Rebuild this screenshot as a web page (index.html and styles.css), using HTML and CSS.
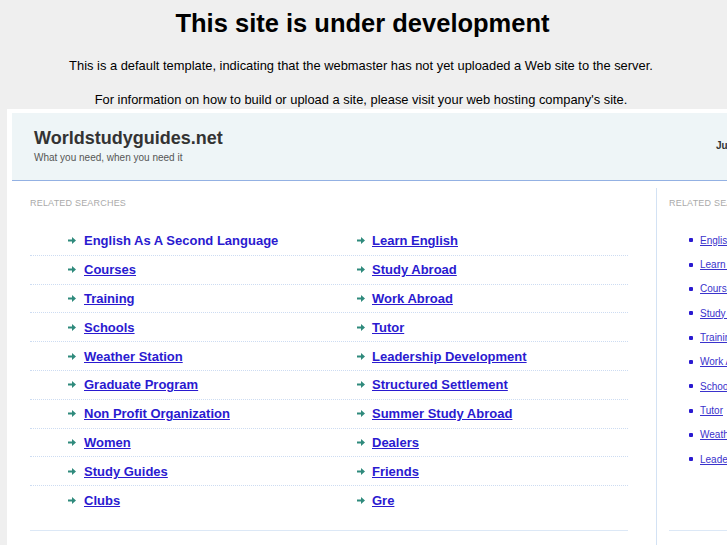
FILE: index.html
```html
<!DOCTYPE html>
<html lang="en">
<head>
    <meta charset="UTF-8">
    <title>This site is under development</title>
    <link rel="stylesheet" href="styles.css">
</head>
<body>

<div class="notice">
    <h1>This site is under development</h1>
    <p class="first">This is a default template, indicating that the webmaster has not yet uploaded a Web site to the server.</p>
    <p class="second">For information on how to build or upload a site, please visit your web hosting company's site.</p>
</div>

<div class="frame">
    <div class="header">
        <div class="brand">
            <div class="title">Worldstudyguides.net</div>
            <div class="tagline">What you need, when you need it</div>
        </div>
        <div class="date">June 24, 2011</div>
    </div>

    <div class="content">
        <div class="main">
            <div class="label">Related Searches</div>
            <div class="rows">
                <div class="row">
                    <div class="cell"><svg class="arrow" viewBox="0 0 8 7"><path d="M0 2.6h4V0l4 3.5L4 7V4.4H0z"/></svg><a href="#" class="plain">English As A Second Language</a></div>
                    <div class="cell"><svg class="arrow" viewBox="0 0 8 7"><path d="M0 2.6h4V0l4 3.5L4 7V4.4H0z"/></svg><a href="#">Learn English</a></div>
                </div>
                <div class="row">
                    <div class="cell"><svg class="arrow" viewBox="0 0 8 7"><path d="M0 2.6h4V0l4 3.5L4 7V4.4H0z"/></svg><a href="#">Courses</a></div>
                    <div class="cell"><svg class="arrow" viewBox="0 0 8 7"><path d="M0 2.6h4V0l4 3.5L4 7V4.4H0z"/></svg><a href="#">Study Abroad</a></div>
                </div>
                <div class="row">
                    <div class="cell"><svg class="arrow" viewBox="0 0 8 7"><path d="M0 2.6h4V0l4 3.5L4 7V4.4H0z"/></svg><a href="#">Training</a></div>
                    <div class="cell"><svg class="arrow" viewBox="0 0 8 7"><path d="M0 2.6h4V0l4 3.5L4 7V4.4H0z"/></svg><a href="#">Work Abroad</a></div>
                </div>
                <div class="row">
                    <div class="cell"><svg class="arrow" viewBox="0 0 8 7"><path d="M0 2.6h4V0l4 3.5L4 7V4.4H0z"/></svg><a href="#">Schools</a></div>
                    <div class="cell"><svg class="arrow" viewBox="0 0 8 7"><path d="M0 2.6h4V0l4 3.5L4 7V4.4H0z"/></svg><a href="#">Tutor</a></div>
                </div>
                <div class="row">
                    <div class="cell"><svg class="arrow" viewBox="0 0 8 7"><path d="M0 2.6h4V0l4 3.5L4 7V4.4H0z"/></svg><a href="#">Weather Station</a></div>
                    <div class="cell"><svg class="arrow" viewBox="0 0 8 7"><path d="M0 2.6h4V0l4 3.5L4 7V4.4H0z"/></svg><a href="#">Leadership Development</a></div>
                </div>
                <div class="row">
                    <div class="cell"><svg class="arrow" viewBox="0 0 8 7"><path d="M0 2.6h4V0l4 3.5L4 7V4.4H0z"/></svg><a href="#">Graduate Program</a></div>
                    <div class="cell"><svg class="arrow" viewBox="0 0 8 7"><path d="M0 2.6h4V0l4 3.5L4 7V4.4H0z"/></svg><a href="#">Structured Settlement</a></div>
                </div>
                <div class="row">
                    <div class="cell"><svg class="arrow" viewBox="0 0 8 7"><path d="M0 2.6h4V0l4 3.5L4 7V4.4H0z"/></svg><a href="#">Non Profit Organization</a></div>
                    <div class="cell"><svg class="arrow" viewBox="0 0 8 7"><path d="M0 2.6h4V0l4 3.5L4 7V4.4H0z"/></svg><a href="#">Summer Study Abroad</a></div>
                </div>
                <div class="row">
                    <div class="cell"><svg class="arrow" viewBox="0 0 8 7"><path d="M0 2.6h4V0l4 3.5L4 7V4.4H0z"/></svg><a href="#">Women</a></div>
                    <div class="cell"><svg class="arrow" viewBox="0 0 8 7"><path d="M0 2.6h4V0l4 3.5L4 7V4.4H0z"/></svg><a href="#">Dealers</a></div>
                </div>
                <div class="row">
                    <div class="cell"><svg class="arrow" viewBox="0 0 8 7"><path d="M0 2.6h4V0l4 3.5L4 7V4.4H0z"/></svg><a href="#">Study Guides</a></div>
                    <div class="cell"><svg class="arrow" viewBox="0 0 8 7"><path d="M0 2.6h4V0l4 3.5L4 7V4.4H0z"/></svg><a href="#">Friends</a></div>
                </div>
                <div class="row">
                    <div class="cell"><svg class="arrow" viewBox="0 0 8 7"><path d="M0 2.6h4V0l4 3.5L4 7V4.4H0z"/></svg><a href="#">Clubs</a></div>
                    <div class="cell"><svg class="arrow" viewBox="0 0 8 7"><path d="M0 2.6h4V0l4 3.5L4 7V4.4H0z"/></svg><a href="#">Gre</a></div>
                </div>
            </div>
            <div class="rule"></div>
        </div>

        <div class="sidebar">
            <div class="label">Related Searches</div>
            <ul class="side-links">
                <li><a href="#">English As A Second Language</a></li>
                <li><a href="#">Learn English</a></li>
                <li><a href="#">Courses</a></li>
                <li><a href="#">Study Abroad</a></li>
                <li><a href="#">Training</a></li>
                <li><a href="#">Work Abroad</a></li>
                <li><a href="#">Schools</a></li>
                <li><a href="#">Tutor</a></li>
                <li><a href="#">Weather Station</a></li>
                <li><a href="#">Leadership Development</a></li>
            </ul>
            <div class="rule"></div>
        </div>
    </div>
</div>

</body>
</html>
```

FILE: styles.css
```css
html, body {
    overflow: hidden;
}
body {
    margin: 0;
    background-color: #efefef;
    font-family: "Liberation Sans", Arial, sans-serif;
    color: #000;
}
.notice {
    text-align: center;
}
.notice h1 {
    margin: 8px 0 0;
    padding-right: 2px;
    font-size: 25.5px;
    line-height: 30px;
    font-weight: bold;
}
.notice p {
    font-size: 12.9px;
    line-height: 16px;
    margin: 0;
    padding-right: 5px;
}
.notice .first {
    margin-top: 20px;
}
.notice .second {
    margin-top: 18px;
}
.frame {
    margin: 1px 0 0 7px;
    width: 900px;
    height: 500px;
    padding: 4px 0 0 5px;
    background-color: #fff;
}
.header {
    display: grid;
    grid-template-columns: 682px auto;
    height: 68px;
    padding-left: 22px;
    box-sizing: border-box;
    background-color: #eef5f7;
    border-bottom: 1px solid #93b1e3;
}
.brand .title {
    margin-top: 14px;
    font-size: 18px;
    line-height: 22px;
    font-weight: bold;
    color: #333;
}
.brand .tagline {
    margin-top: 3px;
    font-size: 10px;
    line-height: 12px;
    color: #555;
}
.date {
    margin-top: 27px;
    font-size: 10px;
    line-height: 12px;
    font-weight: bold;
    color: #333;
}
.content {
    display: flex;
    margin-top: 7px;
}
.label {
    font-size: 9px;
    line-height: 11px;
    text-transform: uppercase;
    color: #aaa;
    letter-spacing: 0.2px;
}
.main {
    margin-left: 18px;
    width: 598px;
    padding-top: 10px;
}
.rows {
    margin-top: 18px;
}
.row {
    display: grid;
    grid-template-columns: 289px 1fr;
    height: 28.8px;
    padding-left: 38px;
    box-sizing: border-box;
    border-bottom: 1px dotted #cddcf2;
}
.row:last-child {
    border-bottom: none;
}
.cell {
    display: flex;
    align-items: center;
    gap: 8px;
    height: 27.8px;
}
.cell + .cell {
    gap: 7px;
}
.arrow {
    width: 8px;
    height: 7px;
    fill: #2f8a7c;
    flex-shrink: 0;
}
.cell a {
    font-size: 13px;
    font-weight: bold;
    color: #2a1ad0;
    text-decoration: underline;
}
.cell a.plain {
    text-decoration: none;
}
.rule {
    height: 1px;
    background-color: #dce8f6;
}
.main .rule {
    margin-top: 15px;
}
.sidebar {
    margin-left: 28px;
    border-left: 1px solid #d3e2f4;
    padding-left: 12px;
    padding-top: 10px;
    width: 200px;
    height: 400px;
}
.side-links {
    list-style: none;
    margin: 19px 0 0;
    padding: 0;
}
.side-links li {
    display: flex;
    align-items: center;
    height: 24.35px;
    padding-left: 20px;
}
.side-links li::before {
    content: '';
    width: 4px;
    height: 4px;
    border-radius: 1px;
    background-color: #2a1ad0;
    margin-right: 7px;
}
.side-links a {
    font-size: 10px;
    color: #3a32cc;
    text-decoration: underline;
    white-space: nowrap;
}
.sidebar .rule {
    margin-top: 59px;
}
```
